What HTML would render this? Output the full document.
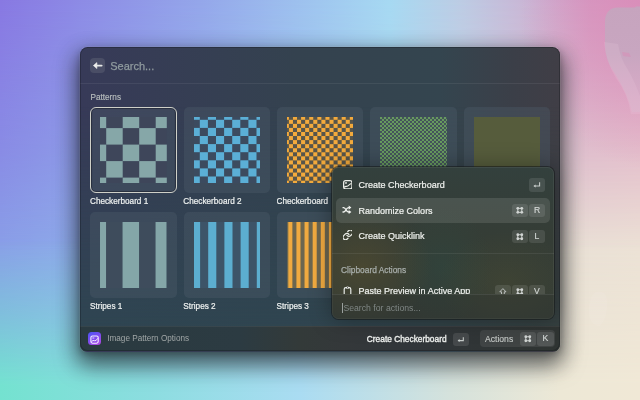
<!DOCTYPE html>
<html><head><meta charset="utf-8">
<style>
*{box-sizing:border-box;margin:0;padding:0}
html,body{width:640px;height:400px;overflow:hidden}
body{position:relative;font-family:"Liberation Sans",sans-serif;background:linear-gradient(90deg,#8a9fe8 0px,#92b6ec 150px,#a2cdee 300px,#c8d4e4 450px,#e9e0d6 560px,#ece2d6 640px)}
.abs{position:absolute}
#bgt{left:0;top:0;width:640px;height:400px;background:linear-gradient(90deg,#8878e2 0px,#94a6ea 200px,#a6d9f2 390px,#bcccE4 460px,#cab4d4 530px,#d69cc4 590px,#dc9cc2 640px);-webkit-mask-image:linear-gradient(180deg,#000 0px,rgba(0,0,0,.5) 150px,transparent 250px);mask-image:linear-gradient(180deg,#000 0px,rgba(0,0,0,.5) 150px,transparent 250px)}
#bgb{left:0;top:0;width:640px;height:400px;background:linear-gradient(90deg,#74e2d0 0px,#8cdde0 150px,#aadcf2 300px,#d5e2dc 450px,#ede8d6 560px,#f0e8d6 640px);-webkit-mask-image:linear-gradient(180deg,transparent 240px,rgba(0,0,0,.5) 318px,#000 385px);mask-image:linear-gradient(180deg,transparent 240px,rgba(0,0,0,.5) 318px,#000 385px)}
#shadow{left:80px;top:47px;width:480px;height:304px;border-radius:7px;box-shadow:0 12px 22px 2px rgba(22,26,28,.5),0 8px 20px 4px rgba(22,26,30,.3),0 3px 6px rgba(0,0,0,.25)}
#win{will-change:transform;left:80px;top:47px;width:480px;height:304.5px;border-radius:7.5px;overflow:hidden;background:linear-gradient(90deg,#373a58 0%,#34424f 45%,#34454f 75%,#3b3f48 90%,#403e46 100%);box-shadow:0 0 0 .5px rgba(255,255,255,.12)}
#winb{left:0;top:0;width:480px;height:304px;background:linear-gradient(90deg,#2e4651 0%,#2f4550 45%,#34403f 100%);-webkit-mask-image:linear-gradient(180deg,transparent 60px,#000 300px);mask-image:linear-gradient(180deg,transparent 60px,#000 300px)}
#backbtn{left:10.2px;top:11.2px;width:15.3px;height:15.3px;border-radius:4px;background:#4a4e66}
#search{left:30.2px;top:12px;font-size:11px;color:#8f9a9e;line-height:14px;-webkit-text-stroke:.25px #8f9a9e}
#sep1{left:0;top:36px;width:480px;height:1px;background:rgba(255,255,255,.065)}
#ptitle{left:10.5px;top:46px;font-size:8.2px;color:#b8bebe;line-height:10px;-webkit-text-stroke:.15px #b8bebe}
.tile{width:86.5px;height:86px;border-radius:5px;background:rgba(80,95,110,.35)}
.lbl{font-size:8.2px;color:#eef1f0;line-height:10px;-webkit-text-stroke:.2px #eef1f0}
#footer{left:0;top:279px;width:480px;height:25px;background:linear-gradient(90deg,#2a3a40 0,#2c3b42 160px,#333a39 220px,#34383a 265px,#31363a 330px,#2f3432 480px);border-top:1px solid rgba(255,255,255,.06)}
.kbd{position:absolute;height:13.5px;border-radius:3px;background:rgba(255,255,255,.1);color:#d4d8d6;-webkit-text-stroke:.15px #d4d8d6;font-size:8.6px;text-align:center;line-height:13.5px}
.kbd svg{position:absolute;left:0;top:0}
#panel{will-change:transform;left:332px;top:167px;width:222px;height:152px;border-radius:6.5px;background:radial-gradient(ellipse 70px 60px at 30px 100px,rgba(110,90,40,.35),transparent),radial-gradient(ellipse 70px 50px at 175px 115px,rgba(95,90,45,.22),transparent),radial-gradient(ellipse 50px 60px at 110px 100px,rgba(40,80,72,.28),transparent),linear-gradient(180deg,#33403d 0%,#353d36 45%,#343c36 100%);box-shadow:0 0 0 1px rgba(20,24,24,.55),inset 0 0 0 1px rgba(255,255,255,.06),0 0 22px rgba(0,0,0,.35);overflow:hidden}
.arow{position:absolute;left:27.2px;font-size:9px;color:#eff1ee;line-height:11px;-webkit-text-stroke:.2px #eff1ee}
.ico{position:absolute;left:11px}
</style></head><body>
<div id="bgt" class="abs"></div>
<div id="bgb" class="abs"></div>
<div class="abs" style="left:0;top:0;width:640px;height:400px;background:radial-gradient(ellipse 140px 150px at 660px 20px,rgba(216,136,182,.85),rgba(216,136,182,.4) 50%,rgba(216,136,182,0))"></div>
<svg class="abs" style="left:0;top:0" width="640" height="400">
  <defs>
    <linearGradient id="fg" x1="0" y1="0" x2="0" y2="1"><stop offset="0" stop-color="#c6a4be"/><stop offset=".45" stop-color="#c8a6c0"/><stop offset="1" stop-color="#d8b4cc" stop-opacity=".5"/></linearGradient>
  </defs>
  <path d="M605,45 L605,22 Q605,8 618,7.5 L635,7.5 L636,6.5 L640,6.5 L640,112 L632,112 Q628,94 614,72 Q605,60 605,45 Z" fill="url(#fg)"/>
  <pattern id="dots" width="1.7" height="1.7" patternUnits="userSpaceOnUse"><circle cx=".85" cy=".85" r=".55" fill="#eccde0"/></pattern>
  <path d="M604,42 Q606,62 616,78 Q628,94 631,114 L640,114 L640,96 Q634,80 628,70 Q620,58 618,44 Z" fill="url(#dots)" opacity=".5"/>
  <path d="M622,52 L629,53 L631,57 L623,56 Z" fill="#d98cb6" opacity=".5"/>
  <pattern id="dots2" width="2" height="2" patternUnits="userSpaceOnUse"><circle cx="1" cy="1" r=".6" fill="#f8f0f2"/></pattern>
  <path d="M596,292 Q606,290 607,300 Q608,318 600,326 Q590,326 589,312 Q589,296 596,292 Z" fill="url(#dots2)" opacity=".35"/>
</svg>
<div id="shadow" class="abs"></div>
<div id="win" class="abs">
  <div id="winb" class="abs"></div>
  <div id="backbtn" class="abs"><svg width="15.3" height="15.3" viewBox="0 0 15.3 15.3"><path d="M3.4 7.6L6.9 4.6V10.6Z" fill="#f0f0ee" stroke="#f0f0ee" stroke-width=".6" stroke-linejoin="round"/><path d="M6.5 7.6H11.6" stroke="#e8eae8" stroke-width="1.9" stroke-linecap="round"/></svg></div>
  <div id="search" class="abs">Search...</div>
  <div id="sep1" class="abs"></div>
  <div id="ptitle" class="abs">Patterns</div>

  <!-- row 1 tiles -->
  <div class="tile abs" style="left:9.8px;top:59.8px;width:87.2px;height:86.4px;border-radius:6px;border:1.8px solid #cfd0c8;box-shadow:inset 0 0 0 1.1px rgba(25,30,42,.55)"></div>
  <div class="tile abs" style="left:103.6px;top:60px"></div>
  <div class="tile abs" style="left:196.9px;top:60px"></div>
  <div class="tile abs" style="left:290.2px;top:60px"></div>
  <div class="tile abs" style="left:383.5px;top:60px"></div>

  <!-- row 2 tiles -->
  <div class="tile abs" style="left:10.3px;top:165px"></div>
  <div class="tile abs" style="left:103.6px;top:165px"></div>
  <div class="tile abs" style="left:196.9px;top:165px"></div>
  <!-- patterns -->
  <svg class="abs" style="left:19.9px;top:69.9px" width="66.8" height="66.5" viewBox="0 0 66.8 66.5"><rect width="66.8" height="66.5" fill="#3e465a"/><g fill="#86a7a8"><rect x="0.00" y="0.00" width="6.20" height="11.10"/><rect x="0.00" y="27.60" width="6.20" height="16.50"/><rect x="0.00" y="60.60" width="6.20" height="5.90"/><rect x="6.20" y="11.10" width="16.50" height="16.50"/><rect x="6.20" y="44.10" width="16.50" height="16.50"/><rect x="22.70" y="0.00" width="16.50" height="11.10"/><rect x="22.70" y="27.60" width="16.50" height="16.50"/><rect x="22.70" y="60.60" width="16.50" height="5.90"/><rect x="39.20" y="11.10" width="16.50" height="16.50"/><rect x="39.20" y="44.10" width="16.50" height="16.50"/><rect x="55.70" y="0.00" width="11.10" height="11.10"/><rect x="55.70" y="27.60" width="11.10" height="16.50"/><rect x="55.70" y="60.60" width="11.10" height="5.90"/></g></svg>
  <svg class="abs" style="left:113.9px;top:70px" width="66.3" height="66.2" viewBox="0 0 66.3 66.2"><rect width="66.3" height="66.2" fill="#3c4b5f"/><g fill="#5bafd6"><rect x="0.00" y="0.00" width="5.80" height="2.80"/><rect x="0.00" y="10.90" width="5.80" height="8.10"/><rect x="0.00" y="27.10" width="5.80" height="8.10"/><rect x="0.00" y="43.30" width="5.80" height="8.10"/><rect x="0.00" y="59.50" width="5.80" height="6.70"/><rect x="5.80" y="2.80" width="8.10" height="8.10"/><rect x="5.80" y="19.00" width="8.10" height="8.10"/><rect x="5.80" y="35.20" width="8.10" height="8.10"/><rect x="5.80" y="51.40" width="8.10" height="8.10"/><rect x="13.90" y="0.00" width="8.10" height="2.80"/><rect x="13.90" y="10.90" width="8.10" height="8.10"/><rect x="13.90" y="27.10" width="8.10" height="8.10"/><rect x="13.90" y="43.30" width="8.10" height="8.10"/><rect x="13.90" y="59.50" width="8.10" height="6.70"/><rect x="22.00" y="2.80" width="8.10" height="8.10"/><rect x="22.00" y="19.00" width="8.10" height="8.10"/><rect x="22.00" y="35.20" width="8.10" height="8.10"/><rect x="22.00" y="51.40" width="8.10" height="8.10"/><rect x="30.10" y="0.00" width="8.10" height="2.80"/><rect x="30.10" y="10.90" width="8.10" height="8.10"/><rect x="30.10" y="27.10" width="8.10" height="8.10"/><rect x="30.10" y="43.30" width="8.10" height="8.10"/><rect x="30.10" y="59.50" width="8.10" height="6.70"/><rect x="38.20" y="2.80" width="8.10" height="8.10"/><rect x="38.20" y="19.00" width="8.10" height="8.10"/><rect x="38.20" y="35.20" width="8.10" height="8.10"/><rect x="38.20" y="51.40" width="8.10" height="8.10"/><rect x="46.30" y="0.00" width="8.10" height="2.80"/><rect x="46.30" y="10.90" width="8.10" height="8.10"/><rect x="46.30" y="27.10" width="8.10" height="8.10"/><rect x="46.30" y="43.30" width="8.10" height="8.10"/><rect x="46.30" y="59.50" width="8.10" height="6.70"/><rect x="54.40" y="2.80" width="8.10" height="8.10"/><rect x="54.40" y="19.00" width="8.10" height="8.10"/><rect x="54.40" y="35.20" width="8.10" height="8.10"/><rect x="54.40" y="51.40" width="8.10" height="8.10"/><rect x="62.50" y="0.00" width="3.80" height="2.80"/><rect x="62.50" y="10.90" width="3.80" height="8.10"/><rect x="62.50" y="27.10" width="3.80" height="8.10"/><rect x="62.50" y="43.30" width="3.80" height="8.10"/><rect x="62.50" y="59.50" width="3.80" height="6.70"/></g></svg>
  <svg class="abs" style="left:207px;top:70px" width="66.3" height="66.2" viewBox="0 0 66.3 66.2"><rect width="66.3" height="66.2" fill="#57554b"/><g fill="#f3aa3c"><rect x="0.00" y="0.00" width="1.90" height="2.80"/><rect x="0.00" y="6.86" width="1.90" height="4.06"/><rect x="0.00" y="14.98" width="1.90" height="4.06"/><rect x="0.00" y="23.10" width="1.90" height="4.06"/><rect x="0.00" y="31.22" width="1.90" height="4.06"/><rect x="0.00" y="39.34" width="1.90" height="4.06"/><rect x="0.00" y="47.46" width="1.90" height="4.06"/><rect x="0.00" y="55.58" width="1.90" height="4.06"/><rect x="0.00" y="63.70" width="1.90" height="2.50"/><rect x="1.90" y="2.80" width="4.06" height="4.06"/><rect x="1.90" y="10.92" width="4.06" height="4.06"/><rect x="1.90" y="19.04" width="4.06" height="4.06"/><rect x="1.90" y="27.16" width="4.06" height="4.06"/><rect x="1.90" y="35.28" width="4.06" height="4.06"/><rect x="1.90" y="43.40" width="4.06" height="4.06"/><rect x="1.90" y="51.52" width="4.06" height="4.06"/><rect x="1.90" y="59.64" width="4.06" height="4.06"/><rect x="5.96" y="0.00" width="4.06" height="2.80"/><rect x="5.96" y="6.86" width="4.06" height="4.06"/><rect x="5.96" y="14.98" width="4.06" height="4.06"/><rect x="5.96" y="23.10" width="4.06" height="4.06"/><rect x="5.96" y="31.22" width="4.06" height="4.06"/><rect x="5.96" y="39.34" width="4.06" height="4.06"/><rect x="5.96" y="47.46" width="4.06" height="4.06"/><rect x="5.96" y="55.58" width="4.06" height="4.06"/><rect x="5.96" y="63.70" width="4.06" height="2.50"/><rect x="10.02" y="2.80" width="4.06" height="4.06"/><rect x="10.02" y="10.92" width="4.06" height="4.06"/><rect x="10.02" y="19.04" width="4.06" height="4.06"/><rect x="10.02" y="27.16" width="4.06" height="4.06"/><rect x="10.02" y="35.28" width="4.06" height="4.06"/><rect x="10.02" y="43.40" width="4.06" height="4.06"/><rect x="10.02" y="51.52" width="4.06" height="4.06"/><rect x="10.02" y="59.64" width="4.06" height="4.06"/><rect x="14.08" y="0.00" width="4.06" height="2.80"/><rect x="14.08" y="6.86" width="4.06" height="4.06"/><rect x="14.08" y="14.98" width="4.06" height="4.06"/><rect x="14.08" y="23.10" width="4.06" height="4.06"/><rect x="14.08" y="31.22" width="4.06" height="4.06"/><rect x="14.08" y="39.34" width="4.06" height="4.06"/><rect x="14.08" y="47.46" width="4.06" height="4.06"/><rect x="14.08" y="55.58" width="4.06" height="4.06"/><rect x="14.08" y="63.70" width="4.06" height="2.50"/><rect x="18.14" y="2.80" width="4.06" height="4.06"/><rect x="18.14" y="10.92" width="4.06" height="4.06"/><rect x="18.14" y="19.04" width="4.06" height="4.06"/><rect x="18.14" y="27.16" width="4.06" height="4.06"/><rect x="18.14" y="35.28" width="4.06" height="4.06"/><rect x="18.14" y="43.40" width="4.06" height="4.06"/><rect x="18.14" y="51.52" width="4.06" height="4.06"/><rect x="18.14" y="59.64" width="4.06" height="4.06"/><rect x="22.20" y="0.00" width="4.06" height="2.80"/><rect x="22.20" y="6.86" width="4.06" height="4.06"/><rect x="22.20" y="14.98" width="4.06" height="4.06"/><rect x="22.20" y="23.10" width="4.06" height="4.06"/><rect x="22.20" y="31.22" width="4.06" height="4.06"/><rect x="22.20" y="39.34" width="4.06" height="4.06"/><rect x="22.20" y="47.46" width="4.06" height="4.06"/><rect x="22.20" y="55.58" width="4.06" height="4.06"/><rect x="22.20" y="63.70" width="4.06" height="2.50"/><rect x="26.26" y="2.80" width="4.06" height="4.06"/><rect x="26.26" y="10.92" width="4.06" height="4.06"/><rect x="26.26" y="19.04" width="4.06" height="4.06"/><rect x="26.26" y="27.16" width="4.06" height="4.06"/><rect x="26.26" y="35.28" width="4.06" height="4.06"/><rect x="26.26" y="43.40" width="4.06" height="4.06"/><rect x="26.26" y="51.52" width="4.06" height="4.06"/><rect x="26.26" y="59.64" width="4.06" height="4.06"/><rect x="30.32" y="0.00" width="4.06" height="2.80"/><rect x="30.32" y="6.86" width="4.06" height="4.06"/><rect x="30.32" y="14.98" width="4.06" height="4.06"/><rect x="30.32" y="23.10" width="4.06" height="4.06"/><rect x="30.32" y="31.22" width="4.06" height="4.06"/><rect x="30.32" y="39.34" width="4.06" height="4.06"/><rect x="30.32" y="47.46" width="4.06" height="4.06"/><rect x="30.32" y="55.58" width="4.06" height="4.06"/><rect x="30.32" y="63.70" width="4.06" height="2.50"/><rect x="34.38" y="2.80" width="4.06" height="4.06"/><rect x="34.38" y="10.92" width="4.06" height="4.06"/><rect x="34.38" y="19.04" width="4.06" height="4.06"/><rect x="34.38" y="27.16" width="4.06" height="4.06"/><rect x="34.38" y="35.28" width="4.06" height="4.06"/><rect x="34.38" y="43.40" width="4.06" height="4.06"/><rect x="34.38" y="51.52" width="4.06" height="4.06"/><rect x="34.38" y="59.64" width="4.06" height="4.06"/><rect x="38.44" y="0.00" width="4.06" height="2.80"/><rect x="38.44" y="6.86" width="4.06" height="4.06"/><rect x="38.44" y="14.98" width="4.06" height="4.06"/><rect x="38.44" y="23.10" width="4.06" height="4.06"/><rect x="38.44" y="31.22" width="4.06" height="4.06"/><rect x="38.44" y="39.34" width="4.06" height="4.06"/><rect x="38.44" y="47.46" width="4.06" height="4.06"/><rect x="38.44" y="55.58" width="4.06" height="4.06"/><rect x="38.44" y="63.70" width="4.06" height="2.50"/><rect x="42.50" y="2.80" width="4.06" height="4.06"/><rect x="42.50" y="10.92" width="4.06" height="4.06"/><rect x="42.50" y="19.04" width="4.06" height="4.06"/><rect x="42.50" y="27.16" width="4.06" height="4.06"/><rect x="42.50" y="35.28" width="4.06" height="4.06"/><rect x="42.50" y="43.40" width="4.06" height="4.06"/><rect x="42.50" y="51.52" width="4.06" height="4.06"/><rect x="42.50" y="59.64" width="4.06" height="4.06"/><rect x="46.56" y="0.00" width="4.06" height="2.80"/><rect x="46.56" y="6.86" width="4.06" height="4.06"/><rect x="46.56" y="14.98" width="4.06" height="4.06"/><rect x="46.56" y="23.10" width="4.06" height="4.06"/><rect x="46.56" y="31.22" width="4.06" height="4.06"/><rect x="46.56" y="39.34" width="4.06" height="4.06"/><rect x="46.56" y="47.46" width="4.06" height="4.06"/><rect x="46.56" y="55.58" width="4.06" height="4.06"/><rect x="46.56" y="63.70" width="4.06" height="2.50"/><rect x="50.62" y="2.80" width="4.06" height="4.06"/><rect x="50.62" y="10.92" width="4.06" height="4.06"/><rect x="50.62" y="19.04" width="4.06" height="4.06"/><rect x="50.62" y="27.16" width="4.06" height="4.06"/><rect x="50.62" y="35.28" width="4.06" height="4.06"/><rect x="50.62" y="43.40" width="4.06" height="4.06"/><rect x="50.62" y="51.52" width="4.06" height="4.06"/><rect x="50.62" y="59.64" width="4.06" height="4.06"/><rect x="54.68" y="0.00" width="4.06" height="2.80"/><rect x="54.68" y="6.86" width="4.06" height="4.06"/><rect x="54.68" y="14.98" width="4.06" height="4.06"/><rect x="54.68" y="23.10" width="4.06" height="4.06"/><rect x="54.68" y="31.22" width="4.06" height="4.06"/><rect x="54.68" y="39.34" width="4.06" height="4.06"/><rect x="54.68" y="47.46" width="4.06" height="4.06"/><rect x="54.68" y="55.58" width="4.06" height="4.06"/><rect x="54.68" y="63.70" width="4.06" height="2.50"/><rect x="58.74" y="2.80" width="4.06" height="4.06"/><rect x="58.74" y="10.92" width="4.06" height="4.06"/><rect x="58.74" y="19.04" width="4.06" height="4.06"/><rect x="58.74" y="27.16" width="4.06" height="4.06"/><rect x="58.74" y="35.28" width="4.06" height="4.06"/><rect x="58.74" y="43.40" width="4.06" height="4.06"/><rect x="58.74" y="51.52" width="4.06" height="4.06"/><rect x="58.74" y="59.64" width="4.06" height="4.06"/><rect x="62.80" y="0.00" width="3.50" height="2.80"/><rect x="62.80" y="6.86" width="3.50" height="4.06"/><rect x="62.80" y="14.98" width="3.50" height="4.06"/><rect x="62.80" y="23.10" width="3.50" height="4.06"/><rect x="62.80" y="31.22" width="3.50" height="4.06"/><rect x="62.80" y="39.34" width="3.50" height="4.06"/><rect x="62.80" y="47.46" width="3.50" height="4.06"/><rect x="62.80" y="55.58" width="3.50" height="4.06"/><rect x="62.80" y="63.70" width="3.50" height="2.50"/></g></svg>
  <div class="abs" style="left:300px;top:70px;width:67px;height:66px;background:conic-gradient(#44555a 0 90deg,#679a5f 0 180deg,#44555a 0 270deg,#679a5f 0) 0 0/4px 4px"></div>
  <div class="abs" style="left:393.6px;top:69.9px;width:66.5px;height:66.5px;background:#565c3c"></div>
  <svg class="abs" style="left:20.06px;top:174.9px" width="66.5" height="66.2" viewBox="0 0 66.5 66.2"><rect width="66.5" height="66.2" fill="#3e4c5c"/><g fill="#84a6a8"><rect x="0.00" y="0" width="6.05" height="66.2"/><rect x="22.55" y="0" width="16.50" height="66.2"/><rect x="55.55" y="0" width="10.95" height="66.2"/></g></svg>
  <svg class="abs" style="left:113.9px;top:175.1px" width="66.3" height="66" viewBox="0 0 66.3 66"><rect width="66.3" height="66" fill="#3d5468"/><g fill="#5caed0"><rect x="0.00" y="0" width="6.10" height="66"/><rect x="14.20" y="0" width="8.10" height="66"/><rect x="30.40" y="0" width="8.10" height="66"/><rect x="46.60" y="0" width="8.10" height="66"/><rect x="62.80" y="0" width="3.50" height="66"/></g></svg>
  <svg class="abs" style="left:207.2px;top:174.9px" width="66.3" height="66.2" viewBox="0 0 66.3 66.2"><rect width="66.3" height="66.2" fill="#6b6650"/><g fill="#f0aa40"><rect x="1.30" y="0" width="4.06" height="66.2"/><rect x="9.42" y="0" width="4.06" height="66.2"/><rect x="17.54" y="0" width="4.06" height="66.2"/><rect x="25.66" y="0" width="4.06" height="66.2"/><rect x="33.78" y="0" width="4.06" height="66.2"/><rect x="41.90" y="0" width="4.06" height="66.2"/><rect x="50.02" y="0" width="4.06" height="66.2"/><rect x="58.14" y="0" width="4.06" height="66.2"/><rect x="66.26" y="0" width="0.04" height="66.2"/></g></svg>

  <div class="lbl abs" style="left:10px;top:150px">Checkerboard 1</div>
  <div class="lbl abs" style="left:103.3px;top:150px">Checkerboard 2</div>
  <div class="lbl abs" style="left:196.6px;top:150px;width:53.4px;overflow:hidden;white-space:nowrap">Checkerboard 3</div>


  <div class="lbl abs" style="left:10px;top:254.5px">Stripes 1</div>
  <div class="lbl abs" style="left:103.3px;top:254.5px">Stripes 2</div>
  <div class="lbl abs" style="left:196.6px;top:254.5px">Stripes 3</div>

  <div id="footer" class="abs">
    <div class="abs" style="left:7.8px;top:5.3px;width:13px;height:13px;border-radius:3.5px;background:linear-gradient(150deg,#4a55f4 0%,#7a4cf0 45%,#b548e0 100%)"><svg width="13" height="13" viewBox="0 0 13 13"><rect x="2.9" y="3" width="7.3" height="7.2" rx="1.6" fill="none" stroke="#f4f0ff" stroke-width="1.1"/><path d="M3.5 8.5Q5 6.9 6.5 7.7T9.6 5.4" fill="none" stroke="#f4f0ff" stroke-width=".95"/><path d="M4.3 5H6.3" stroke="#f4f0ff" stroke-width=".9"/></svg></div>
    <div class="abs" style="left:27.2px;top:7px;font-size:8.2px;color:#a0a6a6;line-height:10px">Image Pattern Options</div>
    <div class="abs" style="left:286.8px;top:7px;font-size:8.35px;color:#eef0ee;line-height:10px;-webkit-text-stroke:.35px #eef0ee">Create Checkerboard</div>
    <div class="kbd" style="left:373px;top:5.6px;width:16px;height:13px"><svg width="16" height="13" viewBox="0 0 16 13"><path d="M10.3 4.3V7.6H5.3" fill="none" stroke="#c6cbc9" stroke-width="1.1"/><path d="M4.6 7.6L6.6 6.1V9.1Z" fill="#c6cbc9"/></svg></div>
    <div class="abs" style="left:400.3px;top:2.7px;width:74.7px;height:17.5px;border-radius:4px;background:rgba(255,255,255,.08)"></div>
    <div class="abs" style="left:405px;top:7px;font-size:8.6px;color:#c2c6c4;line-height:10px;-webkit-text-stroke:.15px #c2c6c4">Actions</div>
    <div class="kbd" style="left:440.2px;top:5px;width:15.6px"><svg width="15.6" height="13.5" viewBox="0 0 15.6 13.5"><g fill="#d0d4d2"><circle cx="5.80" cy="4.75" r="1.4"/><circle cx="5.80" cy="8.75" r="1.4"/><circle cx="9.80" cy="4.75" r="1.4"/><circle cx="9.80" cy="8.75" r="1.4"/></g><rect x="5.80" y="4.75" width="4.0" height="4.0" fill="none" stroke="#d0d4d2" stroke-width=".95"/></svg></div>
    <div class="kbd" style="left:457px;top:5px;width:16.7px">K</div>
  </div>
  <div class="abs" style="left:0;top:0;width:480px;height:304px;border-radius:7.5px;box-shadow:inset 0 0 0 1px rgba(12,15,22,.3)"></div>
</div>

<div id="panel" class="abs"><div class="abs" style="left:-.6px;top:-.2px;width:223px;height:153.5px">
  <div class="abs" style="left:4.5px;top:30.8px;width:213.6px;height:25.5px;border-radius:5px;background:rgba(255,255,255,.11)"></div>
  <!-- icons -->
  <svg class="abs" style="left:11.1px;top:12.8px" width="9.6" height="9.6" viewBox="0 0 9.6 9.6"><rect x=".65" y=".65" width="8.3" height="8.3" rx="2" fill="none" stroke="#eceee9" stroke-width="1.25"/><circle cx="3" cy="2.9" r=".95" fill="#eceee9"/><path d="M1.2 7.4C2.4 5.6 3.6 6.9 4.9 5.9S7 3.6 8.5 3.7" fill="none" stroke="#eceee9" stroke-width="1.15"/></svg>
  <svg class="abs" style="left:10.9px;top:38.3px" width="9.6" height="9.6" viewBox="0 0 9.6 9.6"><path d="M.5 2.6H1.6Q3 2.6 4 4.8Q5 7 6.6 7H7.3M.5 7H1.6Q3 7 4 4.8Q5 2.6 6.6 2.6H7.3" fill="none" stroke="#eff1ee" stroke-width="1.3"/><path d="M6.7 .5L9.4 2.6L6.7 4.7ZM6.7 4.9L9.4 7L6.7 9.1Z" fill="#eff1ee"/></svg>
  <svg class="abs" style="left:11.1px;top:63.6px" width="9.8" height="9.8" viewBox="2 2 20 20"><g fill="none" stroke="#eceee9" stroke-width="2.6" stroke-linecap="round"><path d="M10 13a5 5 0 0 0 7.54.54l3-3a5 5 0 0 0-7.07-7.07l-1.72 1.71"/><path d="M14 11a5 5 0 0 0-7.54-.54l-3 3a5 5 0 0 0 7.07 7.07l1.71-1.71"/></g></svg>
  <!-- texts -->
  <div class="arow" style="top:13px">Create Checkerboard</div>
  <div class="arow" style="top:39px">Randomize Colors</div>
  <div class="arow" style="top:64.2px">Create Quicklink</div>
  <div class="abs" style="left:0;top:86.5px;width:223px;height:1px;background:rgba(255,255,255,.07)"></div>
  <div class="abs" style="left:9.6px;top:98px;font-size:8.4px;color:#a6aca9;line-height:10px;-webkit-text-stroke:.25px #a6aca9">Clipboard Actions</div>
  <div class="abs" style="left:0;top:116px;width:223px;height:11.5px;overflow:hidden">
    <svg class="abs" style="left:11.5px;top:2.9px" width="9" height="10" viewBox="0 0 9 10"><path d="M1.2 10V3.2Q1.2 1.6 2.8 1.6H6.2Q7.8 1.6 7.8 3.2V10" fill="none" stroke="#e8ebe8" stroke-width="1.2"/><path d="M3 1.6Q3 .6 4.5 .6Q6 .6 6 1.6V2.6H3Z" fill="#e8ebe8"/><circle cx="4.5" cy="1.6" r=".5" fill="#333"/></svg>
    <div class="arow" style="top:3px">Paste Preview in Active App</div>
    <div class="kbd" style="left:163.5px;top:2.5px;width:15.8px"><svg width="15.8" height="13.5" viewBox="0 0 15.8 13.5"><path d="M7.9 3.6L11 6.8H9.3V9.4H6.5V6.8H4.8Z" fill="none" stroke="#c6cbc9" stroke-width=".9" stroke-linejoin="round"/></svg></div>
    <div class="kbd" style="left:180.8px;top:2.5px;width:15.7px"><svg width="15.6" height="13.5" viewBox="0 0 15.6 13.5"><g fill="#d0d4d2"><circle cx="5.80" cy="4.75" r="1.4"/><circle cx="5.80" cy="8.75" r="1.4"/><circle cx="9.80" cy="4.75" r="1.4"/><circle cx="9.80" cy="8.75" r="1.4"/></g><rect x="5.80" y="4.75" width="4.0" height="4.0" fill="none" stroke="#d0d4d2" stroke-width=".95"/></svg></div>
    <div class="kbd" style="left:197.7px;top:2.5px;width:15.7px">V</div>
  </div>
  <div class="abs" style="left:0;top:127.5px;width:223px;height:26px;background:rgba(45,50,46,.3);border-top:1px solid rgba(255,255,255,.08)"></div>
  <div class="abs" style="left:12px;top:136px;font-size:8.7px;color:#7f8684;line-height:11px">Search for actions...</div>
  <div class="abs" style="left:10.9px;top:136.2px;width:1px;height:9.7px;background:#9aa09e"></div>
  <div class="kbd" style="left:197.6px;top:11.6px;width:15.8px;height:13.8px"><svg width="15.8" height="13.8" viewBox="0 0 15.8 13.8"><path d="M10.6 4.3V8H5.4" fill="none" stroke="#c6cbc9" stroke-width="1.1"/><path d="M4.4 8L6.6 6.4V9.6Z" fill="#c6cbc9"/></svg></div>
  <div class="kbd" style="left:180.8px;top:37.5px;width:15.6px;height:12.7px"><svg width="15.6" height="12.7" viewBox="0 0 15.6 12.7"><g fill="#d0d4d2"><circle cx="5.80" cy="4.35" r="1.4"/><circle cx="5.80" cy="8.35" r="1.4"/><circle cx="9.80" cy="4.35" r="1.4"/><circle cx="9.80" cy="8.35" r="1.4"/></g><rect x="5.80" y="4.35" width="4.0" height="4.0" fill="none" stroke="#d0d4d2" stroke-width=".95"/></svg></div>
  <div class="kbd" style="left:197.8px;top:37.5px;width:15.6px;height:12.7px;line-height:12.7px">R</div>
  <div class="kbd" style="left:180.8px;top:63px;width:15.6px;height:13.5px"><svg width="15.6" height="13.5" viewBox="0 0 15.6 13.5"><g fill="#d0d4d2"><circle cx="5.80" cy="4.75" r="1.4"/><circle cx="5.80" cy="8.75" r="1.4"/><circle cx="9.80" cy="4.75" r="1.4"/><circle cx="9.80" cy="8.75" r="1.4"/></g><rect x="5.80" y="4.75" width="4.0" height="4.0" fill="none" stroke="#d0d4d2" stroke-width=".95"/></svg></div>
  <div class="kbd" style="left:197.8px;top:63px;width:15.6px;height:13.5px">L</div>
</div></div>
</body></html>
